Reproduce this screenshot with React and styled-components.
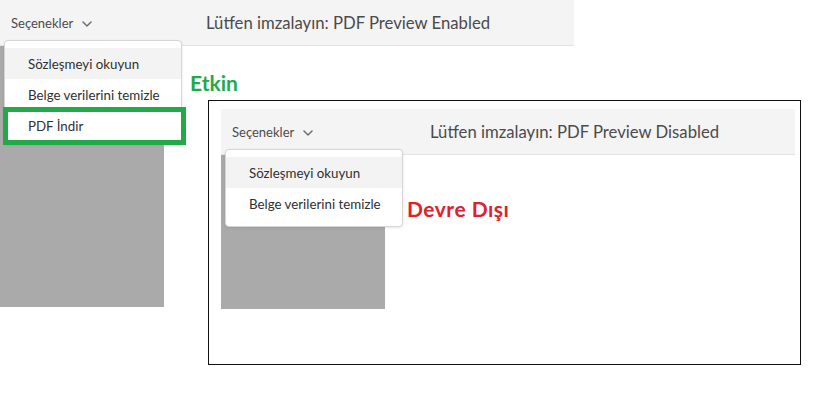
import React from 'react';
import styled, { createGlobalStyle } from 'styled-components';

const GlobalStyle = createGlobalStyle`
  html, body { margin: 0; padding: 0; background: #ffffff; }
  body { font-family: Lato, "Open Sans", sans-serif; }
  *, *::before, *::after { box-sizing: border-box; }
`;

const Canvas = styled.div`
  display: grid;
  width: 829px;
  height: 420px;
  overflow: hidden;
  background: #ffffff;
  & > * {
    grid-area: 1 / 1;
    align-self: start;
    justify-self: start;
  }
`;

const Shot = styled.div`
  position: relative;
  width: 574px;
`;

const Frame = styled.div`
  position: relative;
  margin-left: 208px;
  margin-top: 100px;
  width: 593px;
  height: 265px;
  border: 1px solid #111111;
  padding: 8px 0 0 12px;
`;

const Header = styled.div`
  display: flex;
  align-items: center;
  height: 46px;
  background: #f4f4f4;
  border-bottom: 1px solid #e3e3e3;
  padding-left: 11px;
`;

const OptionsButton = styled.div`
  display: flex;
  align-items: center;
  gap: 9px;
  width: ${(p) => p.$w}px;
  font-size: 13px;
  color: #4b4b4b;
`;

const Chevron = styled.svg`
  width: 10px;
  height: 6px;
  margin-top: 2px;
`;

const Title = styled.div`
  font-size: 16.7px;
  color: #4b4b4b;
`;

const Body = styled.div`
  display: flex;
`;

const Placeholder = styled.div`
  width: 164px;
  height: ${(p) => p.$h}px;
  background: #aaaaaa;
`;

const Menu = styled.div`
  position: absolute;
  left: 4px;
  top: 40px;
  width: 178px;
  background: #ffffff;
  border: 1px solid #d6d6d6;
  border-radius: 4px;
  padding: 7px 0 ${(p) => p.$padBottom}px;
  box-shadow: 0 1px 3px rgba(0, 0, 0, 0.1);
`;

const MenuItem = styled.div`
  height: 31px;
  display: flex;
  align-items: center;
  padding-left: 23px;
  font-size: 13.3px;
  color: #2f2f2f;
  background: ${(p) => (p.$active ? '#f3f3f3' : 'transparent')};
`;

const HighlightBox = styled.div`
  position: absolute;
  left: 3px;
  top: 107px;
  width: 183px;
  height: 38px;
  border: 5px solid #22a948;
`;

const Label = styled.div`
  position: absolute;
  left: ${(p) => p.$x}px;
  top: ${(p) => p.$y}px;
  font-size: 21px;
  font-weight: 700;
  line-height: 1;
  letter-spacing: ${(p) => p.$ls || 0}px;
  color: ${(p) => p.$color};
`;

const ChevronIcon = () => (
  <Chevron viewBox="0 0 10 6" fill="none">
    <path d="M1 1l4 4 4-4" stroke="#6e6e6e" strokeWidth="1.5" strokeLinecap="round" strokeLinejoin="round" />
  </Chevron>
);

const ScreenHeader = ({ title, optionsWidth }) => (
  <Header>
    <OptionsButton $w={optionsWidth}>
      Seçenekler
      <ChevronIcon />
    </OptionsButton>
    <Title>{title}</Title>
  </Header>
);

export default function App() {
  return (
    <>
      <GlobalStyle />
      <Canvas>
        <Shot>
          <ScreenHeader title="Lütfen imzalayın: PDF Preview Enabled" optionsWidth={195} />
          <Body>
            <Placeholder $h={261} />
          </Body>
          <Menu $padBottom={2}>
            <MenuItem $active>Sözleşmeyi okuyun</MenuItem>
            <MenuItem>Belge verilerini temizle</MenuItem>
            <MenuItem>PDF İndir</MenuItem>
          </Menu>
          <HighlightBox />
          <Label $x={190} $y={72} $color="#22a948">Etkin</Label>
        </Shot>
        <Frame>
          <Shot>
            <ScreenHeader title="Lütfen imzalayın: PDF Preview Disabled" optionsWidth={198} />
            <Body>
              <Placeholder $h={154} />
            </Body>
            <Menu $padBottom={7}>
              <MenuItem $active>Sözleşmeyi okuyun</MenuItem>
              <MenuItem>Belge verilerini temizle</MenuItem>
            </Menu>
          </Shot>
          <Label $x={198} $y={97} $ls={0.5} $color="#e0202a">Devre Dışı</Label>
        </Frame>
      </Canvas>
    </>
  );
}
